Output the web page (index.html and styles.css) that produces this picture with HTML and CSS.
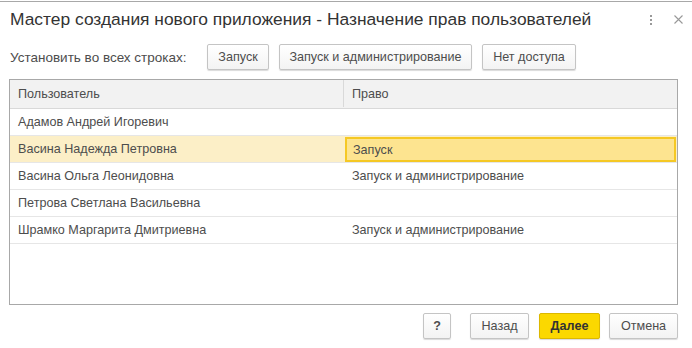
FILE: index.html
```html
<!DOCTYPE html>
<html lang="ru">
<head>
    <meta charset="UTF-8">
    <title>Мастер создания нового приложения</title>
    <link rel="stylesheet" href="styles.css">
</head>
<body>
    <div class="window">
        <header class="title-bar">
            <h1>Мастер создания нового приложения - Назначение прав пользователей</h1>
            <div class="title-tools">
                <span class="kebab"><i></i><i></i><i></i></span>
                <svg class="close" width="9" height="9" viewBox="0 0 9 9">
                    <path d="M0.5 0.5L8.5 8.5M8.5 0.5L0.5 8.5" stroke="#999" stroke-width="1.1"/>
                </svg>
            </div>
        </header>

        <div class="set-all">
            <span class="set-label">Установить во всех строках:</span>
            <button class="btn btn-start">Запуск</button>
            <button class="btn btn-admin">Запуск и администрирование</button>
            <button class="btn btn-none">Нет доступа</button>
        </div>

        <div class="grid">
            <div class="row head">
                <div class="cell">Пользователь</div>
                <div class="cell">Право</div>
            </div>
            <div class="row">
                <div class="cell">Адамов Андрей Игоревич</div>
                <div class="cell"></div>
            </div>
            <div class="row selected">
                <div class="cell">Васина Надежда Петровна</div>
                <div class="cell current">Запуск</div>
            </div>
            <div class="row">
                <div class="cell">Васина Ольга Леонидовна</div>
                <div class="cell">Запуск и администрирование</div>
            </div>
            <div class="row">
                <div class="cell">Петрова Светлана Васильевна</div>
                <div class="cell"></div>
            </div>
            <div class="row">
                <div class="cell">Шрамко Маргарита Дмитриевна</div>
                <div class="cell">Запуск и администрирование</div>
            </div>
        </div>

        <footer class="actions">
            <button class="btn btn-help">?</button>
            <button class="btn btn-back">Назад</button>
            <button class="btn btn-next">Далее</button>
            <button class="btn btn-cancel">Отмена</button>
        </footer>
    </div>
</body>
</html>
```

FILE: styles.css
```css
body {
    margin: 0;
    font-family: "Liberation Sans", Arial, sans-serif;
    font-size: 12.6px;
    color: #4d4d4d;
    background-color: #fff;
}

.window {
    width: 692px;
    height: 348px;
    box-sizing: border-box;
    border-top: 1px solid #a8a8a8;
    margin-top: 1px;
    display: flex;
    flex-direction: column;
}

.title-bar {
    display: flex;
    align-items: center;
    height: 35px;
    padding: 0 9px 0 10px;
}

.title-bar h1 {
    flex: 1;
    margin: 0;
    font-size: 17.4px;
    font-weight: normal;
    color: #333;
    white-space: nowrap;
}

.title-tools {
    display: flex;
    align-items: center;
    justify-content: space-between;
    width: 33px;
    flex: none;
}

.kebab {
    display: flex;
    flex-direction: column;
    gap: 2px;
    padding-top: 1px;
}

.kebab i {
    display: block;
    width: 2px;
    height: 2px;
    background-color: #999;
}

.close {
    flex: none;
}

.set-all {
    display: flex;
    align-items: center;
    padding: 7px 10px 0;
    height: 26px;
}

.set-label {
    width: 178px;
    margin-right: 19px;
    font-size: 13.5px;
    white-space: nowrap;
}

.btn {
    font-family: "Liberation Sans", Arial, sans-serif;
    font-size: 12.6px;
    color: #4d4d4d;
    background: linear-gradient(#fff, #f3f3f3);
    border: 1px solid #c4c4c4;
    border-radius: 2px;
    box-shadow: 0 1px 1px rgba(0, 0, 0, 0.15);
    height: 26px;
    padding: 0;
    margin-right: 10px;
    cursor: pointer;
}

.btn-start {
    width: 62px;
}

.btn-admin {
    width: 193px;
}

.btn-none {
    width: 94px;
}

.grid {
    margin: 9px 14px 0 9px;
    height: 226px;
    box-sizing: border-box;
    border: 1px solid #a8a8a8;
    background-color: #fff;
}

.row {
    display: grid;
    grid-template-columns: 334px 1fr;
    height: 27px;
    border-bottom: 1px solid #e6e6e6;
    box-sizing: border-box;
}

.row.head {
    height: 29px;
    padding-bottom: 1px;
    background-color: #f2f2f2;
    border-bottom: 1px solid #d9d9d9;
}

.row.head .cell:first-child {
    border-right: 1px solid #d9d9d9;
}

.cell {
    display: flex;
    align-items: center;
    padding-left: 8px;
    white-space: nowrap;
}

.row.selected {
    background-color: #fcefc7;
}

.cell.current {
    background-color: #fde490;
    border: 2px solid #f5c824;
    margin: 1px 1px 0 1px;
    padding-left: 6px;
}

.actions {
    display: flex;
    justify-content: flex-end;
    padding: 8px 14px 0 0;
}

.btn-help {
    width: 28px;
    font-weight: bold;
    margin-right: 19px;
}

.btn-back {
    width: 59px;
}

.btn-next {
    width: 61px;
    margin-right: 9px;
    font-weight: bold;
    color: #333;
    background: #fbd800;
    border-color: #dcb800;
}

.btn-cancel {
    width: 69px;
    margin-right: 0;
}
```
